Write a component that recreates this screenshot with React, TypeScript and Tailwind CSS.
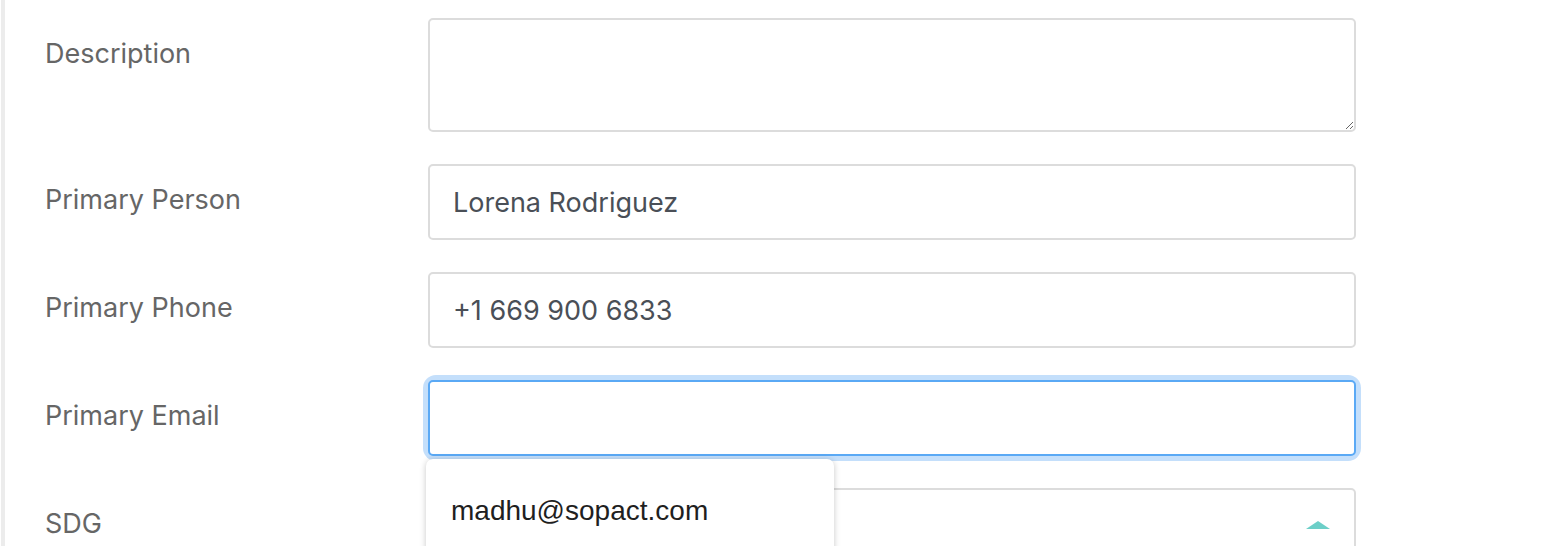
import { useState } from 'react';

interface FieldRowProps {
  label: string;
  children: React.ReactNode;
}

function FieldRow({ label, children }: FieldRowProps) {
  return (
    <div className="flex items-start">
      <label className="w-[383px] shrink-0 pt-[21px] text-[27px] leading-[30px] text-[#666666]">{label}</label>
      <div className="relative w-[928px]">{children}</div>
    </div>
  );
}

const inputClass =
  'block h-[76px] w-full rounded-[5px] border-2 border-[#dcdcdc] bg-white px-[23px] text-[27px] text-[#4a4f57] outline-none';

export default function App() {
  const [person, setPerson] = useState('Lorena Rodriguez');
  const [phone, setPhone] = useState('+1 669 900 6833');
  const [email, setEmail] = useState('');

  return (
    <div
      className="h-[546px] w-[1566px] overflow-hidden bg-white"
      style={{ fontFamily: 'Inter, "Noto Sans", sans-serif' }}
    >
      <div className="ml-[1px] flex h-full flex-col gap-[32px] border-l-[4px] border-[#ececec] pl-[40px] pt-[18px]">
        <FieldRow label="Description">
          <textarea className="block h-[114px] w-full resize-y rounded-[5px] border-2 border-[#dcdcdc] bg-white px-[23px] py-[12px] text-[27px] outline-none" />
        </FieldRow>

        <FieldRow label="Primary Person">
          <input className={inputClass} value={person} onChange={(e) => setPerson(e.target.value)} />
        </FieldRow>

        <FieldRow label="Primary Phone">
          <input className={inputClass} value={phone} onChange={(e) => setPhone(e.target.value)} />
        </FieldRow>

        <FieldRow label="Primary Email">
          <div className="rounded-[8px] shadow-[0_0_0_5px_#c4dffb]">
            <input
              className="block h-[76px] w-full rounded-[5px] border-2 border-[#5aa9f5] bg-white px-[23px] text-[27px] text-[#4a4f57] outline-none"
              value={email}
              onChange={(e) => setEmail(e.target.value)}
            />
          </div>
          <div
            className="absolute left-[-2px] top-[79px] z-10 h-[120px] w-[408px] rounded-[7px] bg-white shadow-[0_1px_6px_rgba(0,0,0,0.22)]"
            style={{ fontFamily: '"Liberation Sans", Arial, sans-serif' }}
          >
            <div className="px-[25px] pt-[36px] text-[28px] leading-[32px] text-[#1f1f1f]">madhu@sopact.com</div>
          </div>
        </FieldRow>

        <FieldRow label="SDG">
          <div className="relative h-[76px] w-full rounded-[5px] border-2 border-[#dcdcdc] bg-white">
            <svg className="absolute right-[24px] top-[31px]" width="24" height="8" viewBox="0 0 24 8">
              <polygon points="12,0 24,8 0,8" fill="#6ccfc8" />
            </svg>
          </div>
        </FieldRow>
      </div>
    </div>
  );
}
